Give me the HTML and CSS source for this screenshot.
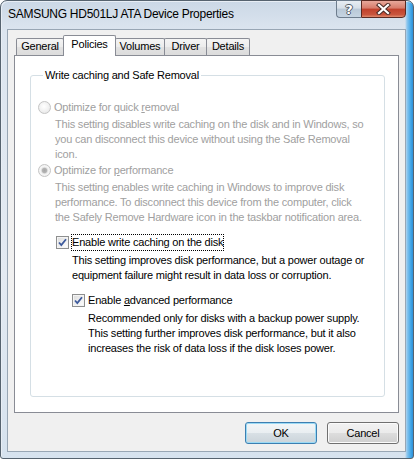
FILE: index.html
```html
<!DOCTYPE html>
<html>
<head>
<meta charset="utf-8">
<title>SAMSUNG HD501LJ ATA Device Properties</title>
<link rel="stylesheet" href="styles.css">
</head>
<body>
<div class="window">
  <div class="titlebar">
    <span class="title">SAMSUNG HD501LJ ATA Device Properties</span>
    <div class="caption-btns">
      <div class="cbtn help"><span class="qmark">?</span></div>
      <div class="cbtn close">
        <svg width="17" height="12" viewBox="0 0 17 12">
          <path d="M4 2 L13 10 M13 2 L4 10" stroke="#4a2b26" stroke-width="4.2" stroke-linecap="square" fill="none"/>
          <path d="M4 2 L13 10 M13 2 L4 10" stroke="#ffffff" stroke-width="2.2" stroke-linecap="square" fill="none"/>
        </svg>
      </div>
    </div>
  </div>
  <div class="client">
    <div class="tabs">
      <div class="tab t-general">General</div>
      <div class="tab sel t-policies">Policies</div>
      <div class="tab t-volumes">Volumes</div>
      <div class="tab t-driver">Driver</div>
      <div class="tab t-details">Details</div>
    </div>
    <div class="panel">
      <fieldset class="group">
        <legend>Write caching and Safe Removal</legend>
        <div class="opt disabled"><span class="radio"></span><span>Optimize for quick <u>r</u>emoval</span></div>
        <div class="desc disabled">This setting disables write caching on the disk and in Windows, so<br>you can disconnect this device without using the Safe Removal<br>icon.</div>
        <div class="opt opt2 disabled"><span class="radio checked"></span><span>Optimize for <u>p</u>erformance</span></div>
        <div class="desc disabled">This setting enables write caching in Windows to improve disk<br>performance. To disconnect this device from the computer, click<br>the Safely Remove Hardware icon in the taskbar notification area.</div>
        <div class="opt cb1"><span class="check"><svg width="11" height="11" viewBox="0 0 11 11"><path d="M2 5.5 L4.3 8 L9 2.2" stroke="#3d5a9c" stroke-width="1.8" fill="none"/></svg></span><span class="focus">Enable write caching on the disk</span></div>
        <div class="desc d3">This setting improves disk performance, but a power outage or<br>equipment failure might result in data loss or corruption.</div>
        <div class="opt cb2"><span class="check"><svg width="11" height="11" viewBox="0 0 11 11"><path d="M2 5.5 L4.3 8 L9 2.2" stroke="#3d5a9c" stroke-width="1.8" fill="none"/></svg></span><span>Enable <u>a</u>dvanced performance</span></div>
        <div class="desc d4">Recommended only for disks with a backup power supply.<br>This setting further improves disk performance, but it also<br>increases the risk of data loss if the disk loses power.</div>
      </fieldset>
    </div>
    <div class="buttons">
      <button class="btn default">OK</button>
      <button class="btn">Cancel</button>
    </div>
  </div>
</div>
</body>
</html>
```
FILE: styles.css
```css
* { box-sizing: border-box; }
html, body { margin: 0; padding: 0; }
body {
  width: 414px;
  height: 459px;
  overflow: hidden;
  background: #ffffff;
  font-family: "Liberation Sans", Arial, sans-serif;
  font-size: 11px;
  letter-spacing: -0.2px;
  color: #000;
}
.window {
  width: 414px;
  height: 459px;
  border: 1px solid #56636f;
  border-radius: 7px 7px 3px 3px;
  padding: 0 7px 6px 6px;
  display: flex;
  flex-direction: column;
  background:
    linear-gradient(to right, rgba(0,0,0,0) 0, rgba(0,0,0,0) 404px, #8cc6ee 406px, #3ea4e6 410px, #2f8fd6 412px),
    linear-gradient(to bottom, #cbd8e6 0, #dce5ef 30px, #e3eaf2 60%, #d6e2ee 100%);
  box-shadow: inset 1px 1px 0 #e8eef5;
}
.titlebar {
  height: 28px;
  flex: none;
  display: flex;
  align-items: flex-start;
}
.title {
  font-size: 12px;
  letter-spacing: -0.27px;
  line-height: 14px;
  margin: 6px 0 0 1px;
  color: #000;
}
.caption-btns {
  margin-left: auto;
  margin-top: -1px;
  display: flex;
}
.cbtn {
  height: 18px;
  display: flex;
  align-items: center;
  justify-content: center;
}
.help {
  width: 25px;
  border: 1px solid #6e7d8d;
  border-right: none;
  border-radius: 0 0 0 4px;
  background: linear-gradient(#e7edf3 0, #d6dfe8 45%, #b9c8d7 50%, #c6d4e2 100%);
}
.qmark {
  font-family: "DejaVu Sans", sans-serif;
  font-weight: bold;
  font-size: 13px;
  line-height: 13px;
  color: #fff;
  letter-spacing: 0;
  text-shadow: 1px 0 0 #505a66, -1px 0 0 #505a66, 0 1px 0 #505a66, 0 -1px 0 #505a66;
}
.close {
  width: 45px;
  border: 1px solid #5b2a22;
  border-radius: 0 0 4px 0;
  background: linear-gradient(#e7a89b 0, #d77b6a 45%, #c0402b 50%, #c9553d 85%, #e08b6e 100%);
}
.client {
  flex: 1;
  background: #f0f0f0;
  border: 1px solid #98a6b4;
  padding: 5px 6px 7px 6px;
  display: flex;
  flex-direction: column;
}
.tabs {
  display: flex;
  align-items: flex-end;
  height: 21px;
  padding-left: 2px;
  flex: none;
}
.tab {
  height: 17px;
  margin-bottom: 1px;
  margin-left: -1px;
  border: 1px solid #898c95;
  border-bottom: none;
  border-radius: 2px 2px 0 0;
  background: linear-gradient(#f4f4f4 0, #ececec 50%, #e2e2e2 51%, #dcdcdc 100%);
  text-align: center;
  line-height: 15px;
  color: #000;
}
.t-general { width: 48px; margin-left: 0; }
.t-policies { width: 53px; }
.t-volumes { width: 50px; }
.t-driver { width: 43px; }
.t-details { width: 44px; }
.tab.sel {
  height: 21px;
  margin-bottom: 0;
  padding-top: 1px;
  background: #ffffff;
  position: relative;
  z-index: 1;
}
.panel {
  height: 358px;
  margin-top: -1px;
  border: 1px solid #898c95;
  background: #ffffff;
  padding: 12px 13px 0 15px;
  flex: none;
}
.group {
  margin: 0;
  height: 329px;
  min-width: 0;
  border: 1px solid #d5dfe5;
  border-radius: 3px;
  padding: 17px 10px 0 7px;
}
.group legend {
  padding: 0 2px;
  margin-left: 5px;
  line-height: 15px;
  color: #000;
}
.opt {
  display: flex;
  align-items: center;
  height: 15px;
  line-height: 15px;
  white-space: nowrap;
}
.opt2 { margin-top: 1px; }
.disabled { color: #a0a0a0; }
.desc {
  line-height: 15px;
  margin-top: 2px;
  padding-left: 17px;
  white-space: nowrap;
}
.radio {
  width: 13px;
  height: 13px;
  flex: none;
  margin-right: 3px;
  border-radius: 50%;
  border: 1px solid #c4c4c4;
  background: radial-gradient(circle at 45% 40%, #ffffff 0, #f3f3f3 45%, #e2e2e2 100%);
}
.radio.checked {
  background: radial-gradient(circle at 50% 50%, #a6a6a6 0, #b4b4b4 2.2px, #e4e4e4 3.2px, #f6f6f6 4.2px, #ebebeb 100%);
}
.check {
  width: 13px;
  height: 13px;
  flex: none;
  margin-right: 3px;
  border: 1px solid #8e8f8f;
  background: linear-gradient(135deg, #dadada 0, #f2f2f2 60%, #ffffff 100%);
  box-shadow: inset 0 0 0 1px #f4f4f4;
  display: flex;
  align-items: center;
  justify-content: center;
}
.check svg { display: block; }
.cb1 { margin-top: 10px; margin-left: 18px; }
.focus { outline: 1px dotted #000; outline-offset: 0; }
.d3 { margin-top: 3px; padding-left: 34px; }
.cb2 { margin-top: 10px; margin-left: 34px; }
.d4 { margin-top: 3px; padding-left: 50px; }
u { text-decoration: underline; text-underline-offset: 1px; }
.buttons {
  display: flex;
  justify-content: flex-end;
  gap: 10px;
  margin-top: 9px;
  flex: none;
}
.btn {
  width: 72px;
  height: 22px;
  padding: 0;
  font: inherit;
  letter-spacing: -0.2px;
  color: #000;
  border: 1px solid #707070;
  border-radius: 3px;
  background: linear-gradient(#f2f2f2 0, #ebebeb 50%, #dddddd 51%, #cfcfcf 100%);
  box-shadow: inset 0 0 0 1px #fbfbfb;
}
.btn.default {
  border-color: #3c7fb1;
  box-shadow: inset 0 0 0 1px #9bdaf5;
  background: linear-gradient(#f2f6f8 0, #e9eef1 50%, #d8e0e5 51%, #cbd4da 100%);
}
```
